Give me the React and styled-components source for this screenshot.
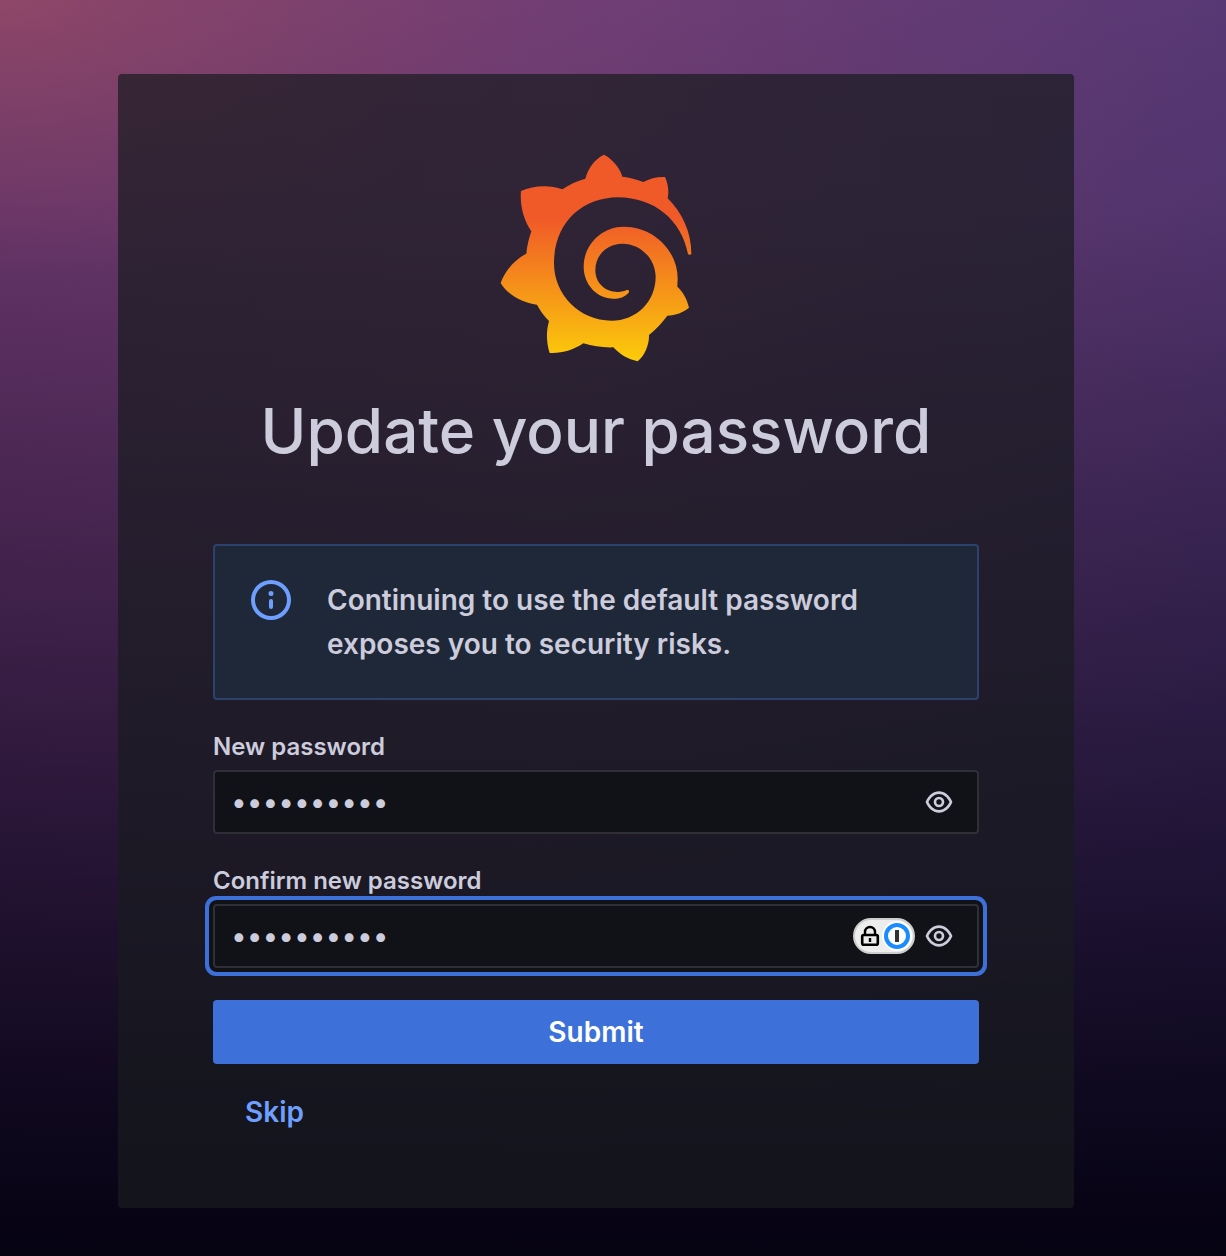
import React, { useState } from 'react';
import styled, { createGlobalStyle, css } from 'styled-components';

const GlobalStyle = createGlobalStyle`
  * {
    box-sizing: border-box;
  }

  body {
    margin: 0;
    background: #050212;
    color: #ccccdc;
    font-family: Inter, 'Liberation Sans', sans-serif;
    font-size: 28px;
    font-weight: 600;
  }
`;

const PageStyled = styled.main`
  min-height: 100vh;
  padding: 74px 152px 48px 118px;
  background:
    linear-gradient(
      to bottom,
      rgba(8, 5, 28, 0) 0%,
      rgba(8, 5, 28, 0.08) 16%,
      rgba(8, 5, 28, 0.28) 32%,
      rgba(8, 5, 28, 0.5) 51%,
      rgba(8, 5, 28, 0.66) 64%,
      rgba(8, 5, 26, 0.8) 76%,
      rgba(7, 4, 22, 0.93) 89%,
      #050212 100%
    ),
    radial-gradient(
      ellipse 560px 280px at 0 0,
      #8e4768 0%,
      rgba(142, 71, 104, 0) 100%
    ),
    linear-gradient(to right, #6e3970 0%, #713e74 45%, #583874 100%);
`;

const CardStyled = styled.section`
  display: flex;
  flex-direction: column;
  align-items: center;
  padding: 80px 95px 64px;
  border-radius: 4px;
  background: rgba(24, 27, 31, 0.7);
`;

const LogoStyled = styled.svg`
  width: 192px;
  height: 208px;
`;

const TitleStyled = styled.h1`
  margin: 32px 0 76px;
  font-size: 62px;
  font-weight: 500;
  line-height: 74px;
  text-align: center;
`;

const FormStyled = styled.form`
  display: flex;
  flex-direction: column;
  width: 100%;
`;

const AlertStyled = styled.div`
  display: flex;
  align-items: flex-start;
  gap: 32px;
  padding: 32px;
  margin-bottom: 32px;
  border: 2px solid #2c416b;
  border-radius: 4px;
  background: #1e2838;
  line-height: 44px;

  svg {
    flex: none;
    width: 48px;
    height: 48px;
    margin: -2px 0;
    fill: #6e9fff;
  }

  p {
    margin: 0;
  }
`;

const FieldStyled = styled.div`
  display: flex;
  flex-direction: column;
  gap: 8px;
  margin-bottom: 32px;

  label {
    font-size: 24px;
    line-height: 30px;
  }
`;

const InputWrapperStyled = styled.div`
  display: flex;
  align-items: center;
  height: 64px;
  padding: 0 22px 0 16px;
  border: 2px solid #2f3037;
  border-radius: 4px;
  background: #111217;

  ${({ $active }) =>
    $active &&
    css`
      box-shadow: 0 0 0 4px #111217, 0 0 0 8px #3d71d9;
    `}
`;

const InputStyled = styled.input`
  flex: 1;
  min-width: 0;
  height: 100%;
  padding: 0;
  border: none;
  outline: none;
  background: transparent;
  color: #ccccdc;
  font: inherit;
  font-weight: 400;
`;

const EyeButtonStyled = styled.button`
  display: flex;
  padding: 0;
  border: none;
  background: transparent;
  cursor: pointer;

  svg {
    width: 32px;
    height: 32px;
    fill: #ccccdc;
  }
`;

const ManagerBadgeStyled = styled.button`
  display: flex;
  padding: 0;
  margin-right: 8px;
  border: none;
  background: transparent;
  cursor: pointer;

  svg {
    width: 62px;
    height: 36px;
  }
`;

const SubmitStyled = styled.button`
  height: 64px;
  border: none;
  border-radius: 4px;
  background: #3d71d9;
  color: #fff;
  font: inherit;
  cursor: pointer;
`;

const SkipStyled = styled.a`
  align-self: flex-start;
  margin-top: 16px;
  padding: 0 32px;
  color: #6e9fff;
  line-height: 64px;
  text-decoration: none;
`;

const Logo = () => (
  <LogoStyled viewBox='31 27 576 624' role='img' aria-label='Grafana'>
    <defs>
      <linearGradient
        id='logo-gradient'
        gradientUnits='userSpaceOnUse'
        x1='0'
        y1='787'
        x2='0'
        y2='221'
      >
        <stop offset='0' stopColor='#fff100' />
        <stop offset='1' stopColor='#f05a28' />
      </linearGradient>
    </defs>
    <path
      fill='url(#logo-gradient)'
      d='M343 29C368 42 392 70 398 95C420 97 440 103 461 111C480 101 502 95 526 96C536 118 538 140 534 160C578 204 605 262 605 326C603 331 597 330 595 327C575 225 495 158 385 157C275 158 193 235 193 355C193 450 270 527 365 527C440 527 498 470 498 395C497 340 452 296 398 296C350 296 317 332 317 376C317 415 348 442 385 441C397 440 405 438 412 434C417 434 420 438 417 443C405 456 390 461 372 461C322 461 282 418 282 365C282 300 335 245 402 245C495 245 564 320 564 400L563 425C580 440 592 462 598 488C580 502 558 511 533 512C518 532 500 552 478 570C479 600 465 632 444 649C415 643 390 628 371 607C340 608 310 604 281 595C252 615 216 626 180 624C170 592 169 560 178 528C163 513 151 496 142 479C97 474 55 450 33 414C47 376 75 344 110 326C112 302 118 280 125 259C102 225 90 180 94 138C130 122 178 118 218 133C240 118 262 108 287 101C295 70 315 42 343 29Z'
    />
  </LogoStyled>
);

const InfoIcon = () => (
  <svg viewBox='0 0 24 24' aria-hidden='true'>
    <path d='M12,2A10,10,0,1,0,22,12,10.01,10.01,0,0,0,12,2Zm0,18a8,8,0,1,1,8-8A8.01,8.01,0,0,1,12,20Zm0-8.5a1,1,0,0,0-1,1v3a1,1,0,0,0,2,0v-3A1,1,0,0,0,12,11.5Zm0-4a1.25,1.25,0,1,0,1.25,1.25A1.25,1.25,0,0,0,12,7.5Z' />
  </svg>
);

const EyeIcon = () => (
  <svg viewBox='0 0 24 24' aria-hidden='true'>
    <path d='M21.92,11.6C19.9,6.91,16.1,4,12,4S4.1,6.91,2.08,11.6a1,1,0,0,0,0,.8C4.1,17.09,7.9,20,12,20s7.9-2.91,9.92-7.6A1,1,0,0,0,21.92,11.6ZM12,18c-3.17,0-6.17-2.29-7.9-6C5.83,8.29,8.83,6,12,6s6.17,2.29,7.9,6C18.17,15.71,15.17,18,12,18ZM12,8a4,4,0,1,0,4,4A4,4,0,0,0,12,8Zm0,6a2,2,0,1,1,2-2A2,2,0,0,1,12,14Z' />
  </svg>
);

const ManagerBadge = () => (
  <ManagerBadgeStyled type='button' aria-label='Fill from password manager'>
    <svg viewBox='0 0 62 36' aria-hidden='true'>
      <rect
        x='1'
        y='1'
        width='60'
        height='34'
        rx='17'
        fill='#ededed'
        stroke='#cdcdcd'
        strokeWidth='2'
      />
      <rect
        x='9.2'
        y='17'
        width='15.6'
        height='9.8'
        rx='1.5'
        fill='none'
        stroke='#000'
        strokeWidth='2.6'
      />
      <path
        d='M12 17V14a5 5 0 0 1 10 0V17M17 20V24'
        fill='none'
        stroke='#000'
        strokeWidth='2.4'
      />
      <circle cx='44' cy='18' r='15' fill='#fff' />
      <circle
        cx='44'
        cy='18'
        r='11'
        fill='#fff'
        stroke='#1a8cff'
        strokeWidth='4'
      />
      <rect x='42' y='12' width='4' height='12' fill='#333' />
    </svg>
  </ManagerBadgeStyled>
);

const PasswordField = ({ id, label, active, value, onChange }) => {
  const [visible, setVisible] = useState(false);

  return (
    <FieldStyled>
      <label htmlFor={id}>{label}</label>
      <InputWrapperStyled $active={active}>
        <InputStyled
          id={id}
          type={visible ? 'text' : 'password'}
          autoComplete='new-password'
          value={value}
          onChange={(e) => onChange(e.target.value)}
        />
        {active && <ManagerBadge />}
        <EyeButtonStyled
          type='button'
          aria-label={visible ? 'Hide password' : 'Show password'}
          onClick={() => setVisible(!visible)}
        >
          <EyeIcon />
        </EyeButtonStyled>
      </InputWrapperStyled>
    </FieldStyled>
  );
};

const App = () => {
  const [newPassword, setNewPassword] = useState('changeme12');
  const [confirmNew, setConfirmNew] = useState('changeme12');

  const submitHandle = (e) => {
    e.preventDefault();
  };

  return (
    <PageStyled>
      <GlobalStyle />
      <CardStyled>
        <Logo />
        <TitleStyled>Update your password</TitleStyled>
        <FormStyled onSubmit={submitHandle}>
          <AlertStyled role='alert'>
            <InfoIcon />
            <p>
              Continuing to use the default password exposes you to security
              risks.
            </p>
          </AlertStyled>
          <PasswordField
            id='new-password'
            label='New password'
            value={newPassword}
            onChange={setNewPassword}
          />
          <PasswordField
            id='confirm-new-password'
            label='Confirm new password'
            active
            value={confirmNew}
            onChange={setConfirmNew}
          />
          <SubmitStyled type='submit'>Submit</SubmitStyled>
          <SkipStyled href='#skip'>Skip</SkipStyled>
        </FormStyled>
      </CardStyled>
    </PageStyled>
  );
};

export default App;
